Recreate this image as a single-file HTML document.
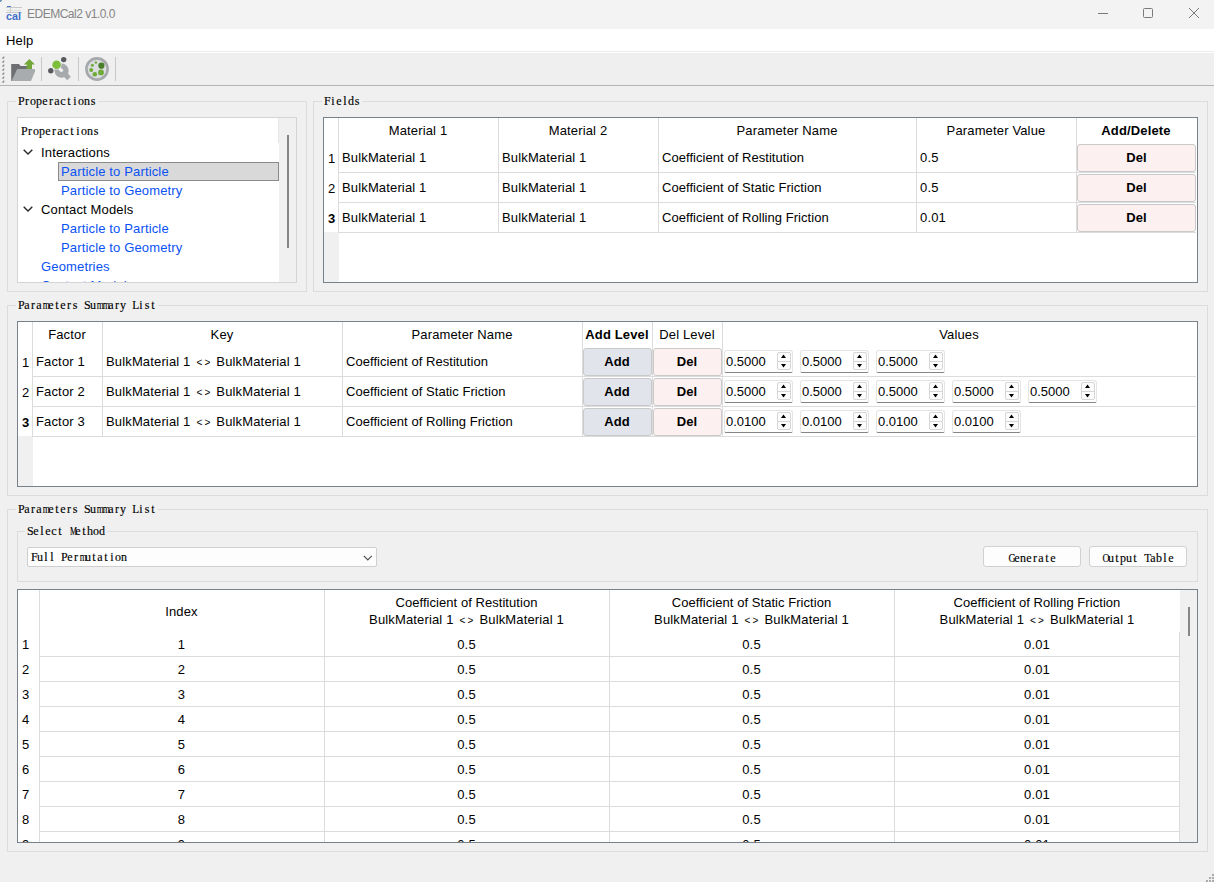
<!DOCTYPE html><html><head><meta charset="utf-8"><style>
html,body{margin:0;padding:0}
body{width:1214px;height:882px;background:#f0f0f0;position:relative;overflow:hidden;font-family:"Liberation Sans",sans-serif;font-size:12px;color:#000}
div{box-sizing:border-box}
.s{position:absolute;white-space:nowrap;font-family:"Liberation Sans",sans-serif;font-size:13px;line-height:16px;letter-spacing:0.15px}
.b{font-weight:bold}
.lg{font-size:10px;display:inline-block;margin:0 1px 0 2.2px;vertical-align:0px}
.m{position:absolute;white-space:nowrap;line-height:14px;font-family:"Liberation Serif",serif;font-size:12px;letter-spacing:0;-webkit-text-stroke:0.15px #000}
.m i{display:inline-block;width:6px;text-align:center;font-style:normal}
.clip{position:absolute;overflow:hidden}
</style></head><body>
<div style="position:absolute;left:0px;top:0px;width:1214px;height:29px;background:#f3f3f3"></div>
<div style="position:absolute;left:0px;top:0px;width:2px;height:2px;background:#6a92b8;border-radius:0 0 2px 0"></div>
<svg style="position:absolute;left:5px;top:5px" width="18" height="17" viewBox="0 0 18 17">
<rect x="2" y="1" width="4" height="1" fill="#4a78c8"/>
<rect x="1" y="2" width="16" height="1" fill="#c8c8c8"/>
<rect x="2" y="5" width="14" height="1" fill="#dcdcdc"/>
<rect x="1" y="7" width="16" height="1" fill="#c8c8c8"/>
<rect x="5" y="2" width="1" height="5" fill="#d0d0d0"/>
<text x="1" y="15" font-family="Liberation Sans" font-weight="bold" font-size="11" fill="#3f6fc8" textLength="15" lengthAdjust="spacingAndGlyphs">cal</text>
</svg>
<div class="s" style="left:27px;top:6px;color:#858585;font-size:12px;letter-spacing:-0.5px">EDEMCal2 v1.0.0</div>
<svg style="position:absolute;left:1090px;top:0" width="124" height="29">
<line x1="8" y1="13.5" x2="18" y2="13.5" stroke="#7a7a7a" stroke-width="1"/>
<rect x="53.5" y="8.5" width="9" height="9" rx="1" fill="none" stroke="#7a7a7a" stroke-width="1"/>
<line x1="99" y1="8" x2="109" y2="18" stroke="#7a7a7a" stroke-width="1"/>
<line x1="109" y1="8" x2="99" y2="18" stroke="#7a7a7a" stroke-width="1"/>
</svg>
<div style="position:absolute;left:0px;top:29px;width:1214px;height:22px;background:#fff"></div>
<div class="s" style="left:6px;top:33px;">Help</div>
<div style="position:absolute;left:0px;top:51px;width:1214px;height:1px;background:#ececec"></div>
<div style="position:absolute;left:0px;top:52px;width:1214px;height:1px;background:#fff"></div>
<div style="position:absolute;left:0px;top:53px;width:1214px;height:32px;background:#efefef"></div>
<div style="position:absolute;left:0px;top:85px;width:1214px;height:1px;background:#b4b4b4"></div>
<svg style="position:absolute;left:0;top:0" width="6" height="90"><path d="M1.6 58.6 L4.2 56 L4.2 58.6 Z" fill="#7e7e7e"/><path d="M1.6 62.6 L4.2 60 L4.2 62.6 Z" fill="#7e7e7e"/><path d="M1.6 66.6 L4.2 64 L4.2 66.6 Z" fill="#7e7e7e"/><path d="M1.6 70.6 L4.2 68 L4.2 70.6 Z" fill="#7e7e7e"/><path d="M1.6 74.6 L4.2 72 L4.2 74.6 Z" fill="#7e7e7e"/><path d="M1.6 78.6 L4.2 76 L4.2 78.6 Z" fill="#7e7e7e"/><path d="M1.6 82.6 L4.2 80 L4.2 82.6 Z" fill="#7e7e7e"/></svg>
<div style="position:absolute;left:41px;top:57px;width:1px;height:24px;background:#c8c8c8"></div>
<div style="position:absolute;left:78px;top:57px;width:1px;height:24px;background:#c8c8c8"></div>
<div style="position:absolute;left:115px;top:57px;width:1px;height:24px;background:#c8c8c8"></div>
<svg style="position:absolute;left:8px;top:54px" width="32" height="30" viewBox="0 0 32 30">
<path d="M3.2 10 H11 L12.5 12 H19 V27 H3.2 Z" fill="#6e6f73"/>
<path d="M9.2 15 H27 V17.5 L23 27 H3.5 Z" fill="#a8acaf"/>
<path d="M21.4 5 L27 10.5 H24 V15 H18.7 V10.5 H15.8 Z" fill="#72a83a"/>
</svg>
<svg style="position:absolute;left:44px;top:54px" width="32" height="30" viewBox="0 0 32 30">
<circle cx="17.6" cy="16.7" r="7.1" fill="#a7aaad"/>
<line x1="19" y1="18" x2="25" y2="24.5" stroke="#a7aaad" stroke-width="5"/>
<circle cx="17.3" cy="16.3" r="1.8" fill="#f0f0f0"/>
<line x1="17.3" y1="16.3" x2="13" y2="12" stroke="#f0f0f0" stroke-width="2.6"/>
<circle cx="12.6" cy="10.7" r="4.9" fill="#f0f0f0"/>
<circle cx="12.6" cy="10.7" r="4.3" fill="#7cbf3c"/>
<circle cx="19.7" cy="5.6" r="2.7" fill="#58595e"/>
<circle cx="6.8" cy="16.8" r="2.7" fill="#58595e"/>
</svg>
<svg style="position:absolute;left:82px;top:54px" width="32" height="30" viewBox="0 0 32 30">
<circle cx="15" cy="15" r="10.6" fill="#dcdde0" stroke="#a6a9ac" stroke-width="2.6"/>
<circle cx="19.4" cy="11.7" r="3.1" fill="#4a7f2a"/>
<circle cx="19" cy="18.4" r="2.9" fill="#6eab38"/>
<circle cx="12.8" cy="20.2" r="2.3" fill="#6eab38"/>
<circle cx="9.2" cy="16" r="2" fill="#6eab38"/>
<circle cx="10.4" cy="11.2" r="1.5" fill="#6eab38"/>
<circle cx="13.9" cy="8.5" r="1.2" fill="#6eab38"/>
</svg>
<div style="position:absolute;left:7px;top:101px;width:300px;height:191px;border:1px solid #dcdcdc;"></div>
<div style="position:absolute;left:16px;top:99px;width:82px;height:4px;background:#f0f0f0"></div>
<div class="m" style="left:18px;top:94px;"><i>P</i><i>r</i><i>o</i><i>p</i><i>e</i><i>r</i><i>a</i><i>c</i><i>t</i><i>i</i><i>o</i><i>n</i><i>s</i></div>
<div class="clip" style="left:17px;top:117px;width:280px;height:166px;border:1px solid #d4d4d4;background:#fff">
<div style="position:absolute;left:261px;top:0px;width:17px;height:164px;background:#f0f0f0"></div>
<div style="position:absolute;left:269px;top:17px;width:2px;height:113px;background:#868686"></div>
<div style="position:absolute;left:260px;top:0px;width:1px;height:25px;background:#e6e6e6"></div>
<div class="m" style="left:3px;top:6px;"><i>P</i><i>r</i><i>o</i><i>p</i><i>e</i><i>r</i><i>a</i><i>c</i><i>t</i><i>i</i><i>o</i><i>n</i><i>s</i></div>
<div style="position:absolute;left:40px;top:44px;width:221px;height:19px;background:#d9d9d9;border:1px solid #8a8a8a"></div>
<div class="s" style="left:23px;top:27px;color:#000">Interactions</div>
<div class="s" style="left:43px;top:46px;color:#0a52f6">Particle to Particle</div>
<div class="s" style="left:43px;top:65px;color:#0a52f6">Particle to Geometry</div>
<div class="s" style="left:23px;top:84px;color:#000">Contact Models</div>
<div class="s" style="left:43px;top:103px;color:#0a52f6">Particle to Particle</div>
<div class="s" style="left:43px;top:122px;color:#0a52f6">Particle to Geometry</div>
<div class="s" style="left:23px;top:141px;color:#0a52f6">Geometries</div>
<div class="s" style="left:23px;top:160px;color:#0a52f6">Contact Models</div>
<svg style="position:absolute;left:5px;top:31px" width="11" height="8"><polyline points="0.7,0.8 5,5 9.3,0.8" fill="none" stroke="#2a2a2a" stroke-width="1.4"/></svg>
<svg style="position:absolute;left:5px;top:88px" width="11" height="8"><polyline points="0.7,0.8 5,5 9.3,0.8" fill="none" stroke="#2a2a2a" stroke-width="1.4"/></svg>
</div>
<div style="position:absolute;left:313px;top:101px;width:895px;height:191px;border:1px solid #dcdcdc;"></div>
<div style="position:absolute;left:322px;top:99px;width:40px;height:4px;background:#f0f0f0"></div>
<div class="m" style="left:324px;top:94px;"><i>F</i><i>i</i><i>e</i><i>l</i><i>d</i><i>s</i></div>
<div class="clip" style="left:323px;top:117px;width:875px;height:166px;border:1px solid #78808a;background:#fff">
<div style="position:absolute;left:0px;top:114px;width:15px;height:50px;background:#f0f0f0"></div>
<div style="position:absolute;left:14px;top:0px;width:1px;height:114px;background:#dcdcdc"></div>
<div style="position:absolute;left:174px;top:0px;width:1px;height:114px;background:#dcdcdc"></div>
<div style="position:absolute;left:334px;top:0px;width:1px;height:114px;background:#dcdcdc"></div>
<div style="position:absolute;left:592px;top:0px;width:1px;height:114px;background:#dcdcdc"></div>
<div style="position:absolute;left:752px;top:0px;width:1px;height:114px;background:#dcdcdc"></div>
<div style="position:absolute;left:14px;top:54px;width:858px;height:1px;background:#dcdcdc"></div>
<div style="position:absolute;left:14px;top:84px;width:858px;height:1px;background:#dcdcdc"></div>
<div style="position:absolute;left:14px;top:114px;width:858px;height:1px;background:#dcdcdc"></div>
<div class="s" style="left:-56.0px;top:5px;width:300px;text-align:center;">Material 1</div>
<div class="s" style="left:104.0px;top:5px;width:300px;text-align:center;">Material 2</div>
<div class="s" style="left:313.0px;top:5px;width:300px;text-align:center;">Parameter Name</div>
<div class="s" style="left:522.0px;top:5px;width:300px;text-align:center;">Parameter Value</div>
<div class="s b" style="left:662.0px;top:5px;width:300px;text-align:center;">Add/Delete</div>
<div class="s" style="left:4px;top:33px;">1</div>
<div class="s" style="left:18px;top:32px;">BulkMaterial 1</div>
<div class="s" style="left:178px;top:32px;">BulkMaterial 1</div>
<div class="s" style="left:338px;top:32px;letter-spacing:0.05px">Coefficient of Restitution</div>
<div class="s" style="left:596px;top:32px;">0.5</div>
<div style="position:absolute;left:753px;top:26px;width:119px;height:28px;background:#fcf0f0;border:1px solid #c9c9c9;border-radius:3px"></div>
<div class="s b" style="left:662.5px;top:32px;width:300px;text-align:center;">Del</div>
<div class="s" style="left:4px;top:63px;">2</div>
<div class="s" style="left:18px;top:62px;">BulkMaterial 1</div>
<div class="s" style="left:178px;top:62px;">BulkMaterial 1</div>
<div class="s" style="left:338px;top:62px;letter-spacing:0.05px">Coefficient of Static Friction</div>
<div class="s" style="left:596px;top:62px;">0.5</div>
<div style="position:absolute;left:753px;top:56px;width:119px;height:28px;background:#fcf0f0;border:1px solid #c9c9c9;border-radius:3px"></div>
<div class="s b" style="left:662.5px;top:62px;width:300px;text-align:center;">Del</div>
<div class="s" style="left:4px;top:93px;font-weight:bold">3</div>
<div class="s" style="left:18px;top:92px;">BulkMaterial 1</div>
<div class="s" style="left:178px;top:92px;">BulkMaterial 1</div>
<div class="s" style="left:338px;top:92px;letter-spacing:0.05px">Coefficient of Rolling Friction</div>
<div class="s" style="left:596px;top:92px;">0.01</div>
<div style="position:absolute;left:753px;top:86px;width:119px;height:28px;background:#fcf0f0;border:1px solid #c9c9c9;border-radius:3px"></div>
<div class="s b" style="left:662.5px;top:92px;width:300px;text-align:center;">Del</div>
</div>
<div style="position:absolute;left:7px;top:305px;width:1201px;height:191px;border:1px solid #dcdcdc;"></div>
<div style="position:absolute;left:16px;top:303px;width:142px;height:4px;background:#f0f0f0"></div>
<div class="m" style="left:18px;top:298px;"><i>P</i><i>a</i><i>r</i><i>a</i><i style="transform:scaleX(0.75)">m</i><i>e</i><i>t</i><i>e</i><i>r</i><i>s</i><i>&nbsp;</i><i>S</i><i>u</i><i style="transform:scaleX(0.75)">m</i><i style="transform:scaleX(0.75)">m</i><i>a</i><i>r</i><i>y</i><i>&nbsp;</i><i style="transform:scaleX(0.95)">L</i><i>i</i><i>s</i><i>t</i></div>
<div class="clip" style="left:17px;top:321px;width:1181px;height:166px;border:1px solid #78808a;background:#fff">
<div style="position:absolute;left:0px;top:114px;width:15px;height:50px;background:#f0f0f0"></div>
<div style="position:absolute;left:14px;top:0px;width:1px;height:114px;background:#dcdcdc"></div>
<div style="position:absolute;left:84px;top:0px;width:1px;height:114px;background:#dcdcdc"></div>
<div style="position:absolute;left:324px;top:0px;width:1px;height:114px;background:#dcdcdc"></div>
<div style="position:absolute;left:564px;top:0px;width:1px;height:114px;background:#dcdcdc"></div>
<div style="position:absolute;left:634px;top:0px;width:1px;height:114px;background:#dcdcdc"></div>
<div style="position:absolute;left:704px;top:0px;width:1px;height:114px;background:#dcdcdc"></div>
<div style="position:absolute;left:14px;top:54px;width:1164px;height:1px;background:#dcdcdc"></div>
<div style="position:absolute;left:14px;top:84px;width:1164px;height:1px;background:#dcdcdc"></div>
<div style="position:absolute;left:14px;top:114px;width:1164px;height:1px;background:#dcdcdc"></div>
<div class="s" style="left:-101.0px;top:5px;width:300px;text-align:center;">Factor</div>
<div class="s" style="left:54.0px;top:5px;width:300px;text-align:center;">Key</div>
<div class="s" style="left:294.0px;top:5px;width:300px;text-align:center;">Parameter Name</div>
<div class="s" style="left:519.0px;top:5px;width:300px;text-align:center;">Del Level</div>
<div class="s" style="left:791.0px;top:5px;width:300px;text-align:center;">Values</div>
<div class="s b" style="left:449.0px;top:5px;width:300px;text-align:center;">Add Level</div>
<div class="s" style="left:4px;top:33px;">1</div>
<div class="s" style="left:18px;top:32px;">Factor 1</div>
<div class="s" style="left:88px;top:32px;">BulkMaterial 1 <span class="lg">&lt;</span><span class="lg" style="margin:0 2.2px 0 1px">&gt;</span> BulkMaterial 1</div>
<div class="s" style="left:328px;top:32px;letter-spacing:0.05px">Coefficient of Restitution</div>
<div style="position:absolute;left:565px;top:26px;width:69px;height:28px;background:#e1e4eb;border:1px solid #c9c9c9;border-radius:3px"></div>
<div class="s b" style="left:449px;top:32px;width:300px;text-align:center;">Add</div>
<div style="position:absolute;left:635px;top:26px;width:69px;height:28px;background:#fcf0f0;border:1px solid #c9c9c9;border-radius:3px"></div>
<div class="s b" style="left:519px;top:32px;width:300px;text-align:center;">Del</div>
<div style="position:absolute;left:706px;top:28px;width:69px;height:23px;background:#fff;border:1px solid #e4e4e4;border-bottom:1px solid #858585;border-radius:3px 3px 2px 2px"></div>
<div class="s" style="left:708px;top:32px;letter-spacing:0">0.5000</div>
<div style="position:absolute;left:759px;top:30px;width:14px;height:18px;background:#fdfdfd;border:1px solid #d6d6d6;border-radius:2px"></div>
<div style="position:absolute;left:760px;top:39px;width:12px;height:1px;background:#d6d6d6"></div>
<svg style="position:absolute;left:759px;top:30px" width="14" height="18"><path d="M4 6 L9 6 L6.5 2.5 Z" fill="#000"/><path d="M4 12 L9 12 L6.5 15.5 Z" fill="#000"/></svg>
<div style="position:absolute;left:782px;top:28px;width:69px;height:23px;background:#fff;border:1px solid #e4e4e4;border-bottom:1px solid #858585;border-radius:3px 3px 2px 2px"></div>
<div class="s" style="left:784px;top:32px;letter-spacing:0">0.5000</div>
<div style="position:absolute;left:835px;top:30px;width:14px;height:18px;background:#fdfdfd;border:1px solid #d6d6d6;border-radius:2px"></div>
<div style="position:absolute;left:836px;top:39px;width:12px;height:1px;background:#d6d6d6"></div>
<svg style="position:absolute;left:835px;top:30px" width="14" height="18"><path d="M4 6 L9 6 L6.5 2.5 Z" fill="#000"/><path d="M4 12 L9 12 L6.5 15.5 Z" fill="#000"/></svg>
<div style="position:absolute;left:858px;top:28px;width:69px;height:23px;background:#fff;border:1px solid #e4e4e4;border-bottom:1px solid #858585;border-radius:3px 3px 2px 2px"></div>
<div class="s" style="left:860px;top:32px;letter-spacing:0">0.5000</div>
<div style="position:absolute;left:911px;top:30px;width:14px;height:18px;background:#fdfdfd;border:1px solid #d6d6d6;border-radius:2px"></div>
<div style="position:absolute;left:912px;top:39px;width:12px;height:1px;background:#d6d6d6"></div>
<svg style="position:absolute;left:911px;top:30px" width="14" height="18"><path d="M4 6 L9 6 L6.5 2.5 Z" fill="#000"/><path d="M4 12 L9 12 L6.5 15.5 Z" fill="#000"/></svg>
<div class="s" style="left:4px;top:63px;">2</div>
<div class="s" style="left:18px;top:62px;">Factor 2</div>
<div class="s" style="left:88px;top:62px;">BulkMaterial 1 <span class="lg">&lt;</span><span class="lg" style="margin:0 2.2px 0 1px">&gt;</span> BulkMaterial 1</div>
<div class="s" style="left:328px;top:62px;letter-spacing:0.05px">Coefficient of Static Friction</div>
<div style="position:absolute;left:565px;top:56px;width:69px;height:28px;background:#e1e4eb;border:1px solid #c9c9c9;border-radius:3px"></div>
<div class="s b" style="left:449px;top:62px;width:300px;text-align:center;">Add</div>
<div style="position:absolute;left:635px;top:56px;width:69px;height:28px;background:#fcf0f0;border:1px solid #c9c9c9;border-radius:3px"></div>
<div class="s b" style="left:519px;top:62px;width:300px;text-align:center;">Del</div>
<div style="position:absolute;left:706px;top:58px;width:69px;height:23px;background:#fff;border:1px solid #e4e4e4;border-bottom:1px solid #858585;border-radius:3px 3px 2px 2px"></div>
<div class="s" style="left:708px;top:62px;letter-spacing:0">0.5000</div>
<div style="position:absolute;left:759px;top:60px;width:14px;height:18px;background:#fdfdfd;border:1px solid #d6d6d6;border-radius:2px"></div>
<div style="position:absolute;left:760px;top:69px;width:12px;height:1px;background:#d6d6d6"></div>
<svg style="position:absolute;left:759px;top:60px" width="14" height="18"><path d="M4 6 L9 6 L6.5 2.5 Z" fill="#000"/><path d="M4 12 L9 12 L6.5 15.5 Z" fill="#000"/></svg>
<div style="position:absolute;left:782px;top:58px;width:69px;height:23px;background:#fff;border:1px solid #e4e4e4;border-bottom:1px solid #858585;border-radius:3px 3px 2px 2px"></div>
<div class="s" style="left:784px;top:62px;letter-spacing:0">0.5000</div>
<div style="position:absolute;left:835px;top:60px;width:14px;height:18px;background:#fdfdfd;border:1px solid #d6d6d6;border-radius:2px"></div>
<div style="position:absolute;left:836px;top:69px;width:12px;height:1px;background:#d6d6d6"></div>
<svg style="position:absolute;left:835px;top:60px" width="14" height="18"><path d="M4 6 L9 6 L6.5 2.5 Z" fill="#000"/><path d="M4 12 L9 12 L6.5 15.5 Z" fill="#000"/></svg>
<div style="position:absolute;left:858px;top:58px;width:69px;height:23px;background:#fff;border:1px solid #e4e4e4;border-bottom:1px solid #858585;border-radius:3px 3px 2px 2px"></div>
<div class="s" style="left:860px;top:62px;letter-spacing:0">0.5000</div>
<div style="position:absolute;left:911px;top:60px;width:14px;height:18px;background:#fdfdfd;border:1px solid #d6d6d6;border-radius:2px"></div>
<div style="position:absolute;left:912px;top:69px;width:12px;height:1px;background:#d6d6d6"></div>
<svg style="position:absolute;left:911px;top:60px" width="14" height="18"><path d="M4 6 L9 6 L6.5 2.5 Z" fill="#000"/><path d="M4 12 L9 12 L6.5 15.5 Z" fill="#000"/></svg>
<div style="position:absolute;left:934px;top:58px;width:69px;height:23px;background:#fff;border:1px solid #e4e4e4;border-bottom:1px solid #858585;border-radius:3px 3px 2px 2px"></div>
<div class="s" style="left:936px;top:62px;letter-spacing:0">0.5000</div>
<div style="position:absolute;left:987px;top:60px;width:14px;height:18px;background:#fdfdfd;border:1px solid #d6d6d6;border-radius:2px"></div>
<div style="position:absolute;left:988px;top:69px;width:12px;height:1px;background:#d6d6d6"></div>
<svg style="position:absolute;left:987px;top:60px" width="14" height="18"><path d="M4 6 L9 6 L6.5 2.5 Z" fill="#000"/><path d="M4 12 L9 12 L6.5 15.5 Z" fill="#000"/></svg>
<div style="position:absolute;left:1010px;top:58px;width:69px;height:23px;background:#fff;border:1px solid #e4e4e4;border-bottom:1px solid #858585;border-radius:3px 3px 2px 2px"></div>
<div class="s" style="left:1012px;top:62px;letter-spacing:0">0.5000</div>
<div style="position:absolute;left:1063px;top:60px;width:14px;height:18px;background:#fdfdfd;border:1px solid #d6d6d6;border-radius:2px"></div>
<div style="position:absolute;left:1064px;top:69px;width:12px;height:1px;background:#d6d6d6"></div>
<svg style="position:absolute;left:1063px;top:60px" width="14" height="18"><path d="M4 6 L9 6 L6.5 2.5 Z" fill="#000"/><path d="M4 12 L9 12 L6.5 15.5 Z" fill="#000"/></svg>
<div class="s" style="left:4px;top:93px;font-weight:bold">3</div>
<div class="s" style="left:18px;top:92px;">Factor 3</div>
<div class="s" style="left:88px;top:92px;">BulkMaterial 1 <span class="lg">&lt;</span><span class="lg" style="margin:0 2.2px 0 1px">&gt;</span> BulkMaterial 1</div>
<div class="s" style="left:328px;top:92px;letter-spacing:0.05px">Coefficient of Rolling Friction</div>
<div style="position:absolute;left:565px;top:86px;width:69px;height:28px;background:#e1e4eb;border:1px solid #c9c9c9;border-radius:3px"></div>
<div class="s b" style="left:449px;top:92px;width:300px;text-align:center;">Add</div>
<div style="position:absolute;left:635px;top:86px;width:69px;height:28px;background:#fcf0f0;border:1px solid #c9c9c9;border-radius:3px"></div>
<div class="s b" style="left:519px;top:92px;width:300px;text-align:center;">Del</div>
<div style="position:absolute;left:706px;top:88px;width:69px;height:23px;background:#fff;border:1px solid #e4e4e4;border-bottom:1px solid #858585;border-radius:3px 3px 2px 2px"></div>
<div class="s" style="left:708px;top:92px;letter-spacing:0">0.0100</div>
<div style="position:absolute;left:759px;top:90px;width:14px;height:18px;background:#fdfdfd;border:1px solid #d6d6d6;border-radius:2px"></div>
<div style="position:absolute;left:760px;top:99px;width:12px;height:1px;background:#d6d6d6"></div>
<svg style="position:absolute;left:759px;top:90px" width="14" height="18"><path d="M4 6 L9 6 L6.5 2.5 Z" fill="#000"/><path d="M4 12 L9 12 L6.5 15.5 Z" fill="#000"/></svg>
<div style="position:absolute;left:782px;top:88px;width:69px;height:23px;background:#fff;border:1px solid #e4e4e4;border-bottom:1px solid #858585;border-radius:3px 3px 2px 2px"></div>
<div class="s" style="left:784px;top:92px;letter-spacing:0">0.0100</div>
<div style="position:absolute;left:835px;top:90px;width:14px;height:18px;background:#fdfdfd;border:1px solid #d6d6d6;border-radius:2px"></div>
<div style="position:absolute;left:836px;top:99px;width:12px;height:1px;background:#d6d6d6"></div>
<svg style="position:absolute;left:835px;top:90px" width="14" height="18"><path d="M4 6 L9 6 L6.5 2.5 Z" fill="#000"/><path d="M4 12 L9 12 L6.5 15.5 Z" fill="#000"/></svg>
<div style="position:absolute;left:858px;top:88px;width:69px;height:23px;background:#fff;border:1px solid #e4e4e4;border-bottom:1px solid #858585;border-radius:3px 3px 2px 2px"></div>
<div class="s" style="left:860px;top:92px;letter-spacing:0">0.0100</div>
<div style="position:absolute;left:911px;top:90px;width:14px;height:18px;background:#fdfdfd;border:1px solid #d6d6d6;border-radius:2px"></div>
<div style="position:absolute;left:912px;top:99px;width:12px;height:1px;background:#d6d6d6"></div>
<svg style="position:absolute;left:911px;top:90px" width="14" height="18"><path d="M4 6 L9 6 L6.5 2.5 Z" fill="#000"/><path d="M4 12 L9 12 L6.5 15.5 Z" fill="#000"/></svg>
<div style="position:absolute;left:934px;top:88px;width:69px;height:23px;background:#fff;border:1px solid #e4e4e4;border-bottom:1px solid #858585;border-radius:3px 3px 2px 2px"></div>
<div class="s" style="left:936px;top:92px;letter-spacing:0">0.0100</div>
<div style="position:absolute;left:987px;top:90px;width:14px;height:18px;background:#fdfdfd;border:1px solid #d6d6d6;border-radius:2px"></div>
<div style="position:absolute;left:988px;top:99px;width:12px;height:1px;background:#d6d6d6"></div>
<svg style="position:absolute;left:987px;top:90px" width="14" height="18"><path d="M4 6 L9 6 L6.5 2.5 Z" fill="#000"/><path d="M4 12 L9 12 L6.5 15.5 Z" fill="#000"/></svg>
</div>
<div style="position:absolute;left:7px;top:509px;width:1201px;height:343px;border:1px solid #dcdcdc;"></div>
<div style="position:absolute;left:16px;top:507px;width:142px;height:4px;background:#f0f0f0"></div>
<div class="m" style="left:18px;top:502px;"><i>P</i><i>a</i><i>r</i><i>a</i><i style="transform:scaleX(0.75)">m</i><i>e</i><i>t</i><i>e</i><i>r</i><i>s</i><i>&nbsp;</i><i>S</i><i>u</i><i style="transform:scaleX(0.75)">m</i><i style="transform:scaleX(0.75)">m</i><i>a</i><i>r</i><i>y</i><i>&nbsp;</i><i style="transform:scaleX(0.95)">L</i><i>i</i><i>s</i><i>t</i></div>
<div style="position:absolute;left:17px;top:531px;width:1181px;height:51px;border:1px solid #dcdcdc;"></div>
<div style="position:absolute;left:25px;top:529px;width:82px;height:4px;background:#f0f0f0"></div>
<div class="m" style="left:27px;top:524px;"><i>S</i><i>e</i><i>l</i><i>e</i><i>c</i><i>t</i><i>&nbsp;</i><i style="transform:scaleX(0.66)">M</i><i>e</i><i>t</i><i>h</i><i>o</i><i>d</i></div>
<div style="position:absolute;left:27px;top:547px;width:350px;height:20px;background:#fdfdfd;border:1px solid #cfcfcf;border-radius:2px"></div>
<div class="m" style="left:31px;top:550px;"><i>F</i><i>u</i><i>l</i><i>l</i><i>&nbsp;</i><i>P</i><i>e</i><i>r</i><i style="transform:scaleX(0.75)">m</i><i>u</i><i>t</i><i>a</i><i>t</i><i>i</i><i>o</i><i>n</i></div>
<svg style="position:absolute;left:363px;top:555px" width="10" height="6"><polyline points="0.8,0.8 4.8,4.8 8.8,0.8" fill="none" stroke="#505050" stroke-width="1.2"/></svg>
<div style="position:absolute;left:983px;top:546px;width:98px;height:21px;background:#fdfdfd;border:1px solid #d0d0d0;border-radius:3px"></div>
<div class="m" style="left:983px;top:551px;width:98px;text-align:center"><i style="transform:scaleX(0.81)">G</i><i>e</i><i>n</i><i>e</i><i>r</i><i>a</i><i>t</i><i>e</i></div>
<div style="position:absolute;left:1089px;top:546px;width:98px;height:21px;background:#fdfdfd;border:1px solid #d0d0d0;border-radius:3px"></div>
<div class="m" style="left:1089px;top:551px;width:98px;text-align:center"><i style="transform:scaleX(0.81)">O</i><i>u</i><i>t</i><i>p</i><i>u</i><i>t</i><i>&nbsp;</i><i style="transform:scaleX(0.95)">T</i><i>a</i><i>b</i><i>l</i><i>e</i></div>
<div class="clip" style="left:17px;top:589px;width:1181px;height:254px;border:1px solid #78808a;background:#fff">
<div style="position:absolute;left:1162px;top:0px;width:17px;height:252px;background:#f0f0f0"></div>
<div style="position:absolute;left:1170px;top:17px;width:2px;height:29px;background:#868686"></div>
<div style="position:absolute;left:21px;top:0px;width:1px;height:252px;background:#dcdcdc"></div>
<div style="position:absolute;left:306px;top:0px;width:1px;height:252px;background:#dcdcdc"></div>
<div style="position:absolute;left:591px;top:0px;width:1px;height:252px;background:#dcdcdc"></div>
<div style="position:absolute;left:876px;top:0px;width:1px;height:252px;background:#dcdcdc"></div>
<div style="position:absolute;left:1161px;top:42px;width:1px;height:210px;background:#dcdcdc"></div>
<div style="position:absolute;left:21px;top:66px;width:1141px;height:1px;background:#dcdcdc"></div>
<div style="position:absolute;left:21px;top:91px;width:1141px;height:1px;background:#dcdcdc"></div>
<div style="position:absolute;left:21px;top:116px;width:1141px;height:1px;background:#dcdcdc"></div>
<div style="position:absolute;left:21px;top:141px;width:1141px;height:1px;background:#dcdcdc"></div>
<div style="position:absolute;left:21px;top:166px;width:1141px;height:1px;background:#dcdcdc"></div>
<div style="position:absolute;left:21px;top:191px;width:1141px;height:1px;background:#dcdcdc"></div>
<div style="position:absolute;left:21px;top:216px;width:1141px;height:1px;background:#dcdcdc"></div>
<div style="position:absolute;left:21px;top:241px;width:1141px;height:1px;background:#dcdcdc"></div>
<div class="s" style="left:13.5px;top:14px;width:300px;text-align:center;">Index</div>
<div class="s" style="left:298.5px;top:5px;width:300px;text-align:center;letter-spacing:0.05px">Coefficient of Restitution</div>
<div class="s" style="left:298.5px;top:22px;width:300px;text-align:center;">BulkMaterial 1 <span class="lg">&lt;</span><span class="lg" style="margin:0 2.2px 0 1px">&gt;</span> BulkMaterial 1</div>
<div class="s" style="left:583.5px;top:5px;width:300px;text-align:center;letter-spacing:0.05px">Coefficient of Static Friction</div>
<div class="s" style="left:583.5px;top:22px;width:300px;text-align:center;">BulkMaterial 1 <span class="lg">&lt;</span><span class="lg" style="margin:0 2.2px 0 1px">&gt;</span> BulkMaterial 1</div>
<div class="s" style="left:869.0px;top:5px;width:300px;text-align:center;letter-spacing:0.05px">Coefficient of Rolling Friction</div>
<div class="s" style="left:869.0px;top:22px;width:300px;text-align:center;">BulkMaterial 1 <span class="lg">&lt;</span><span class="lg" style="margin:0 2.2px 0 1px">&gt;</span> BulkMaterial 1</div>
<div class="s" style="left:4px;top:47px;">1</div>
<div class="s" style="left:13.5px;top:47px;width:300px;text-align:center;">1</div>
<div class="s" style="left:298.5px;top:47px;width:300px;text-align:center;">0.5</div>
<div class="s" style="left:583.5px;top:47px;width:300px;text-align:center;">0.5</div>
<div class="s" style="left:869.0px;top:47px;width:300px;text-align:center;">0.01</div>
<div class="s" style="left:4px;top:72px;">2</div>
<div class="s" style="left:13.5px;top:72px;width:300px;text-align:center;">2</div>
<div class="s" style="left:298.5px;top:72px;width:300px;text-align:center;">0.5</div>
<div class="s" style="left:583.5px;top:72px;width:300px;text-align:center;">0.5</div>
<div class="s" style="left:869.0px;top:72px;width:300px;text-align:center;">0.01</div>
<div class="s" style="left:4px;top:97px;">3</div>
<div class="s" style="left:13.5px;top:97px;width:300px;text-align:center;">3</div>
<div class="s" style="left:298.5px;top:97px;width:300px;text-align:center;">0.5</div>
<div class="s" style="left:583.5px;top:97px;width:300px;text-align:center;">0.5</div>
<div class="s" style="left:869.0px;top:97px;width:300px;text-align:center;">0.01</div>
<div class="s" style="left:4px;top:122px;">4</div>
<div class="s" style="left:13.5px;top:122px;width:300px;text-align:center;">4</div>
<div class="s" style="left:298.5px;top:122px;width:300px;text-align:center;">0.5</div>
<div class="s" style="left:583.5px;top:122px;width:300px;text-align:center;">0.5</div>
<div class="s" style="left:869.0px;top:122px;width:300px;text-align:center;">0.01</div>
<div class="s" style="left:4px;top:147px;">5</div>
<div class="s" style="left:13.5px;top:147px;width:300px;text-align:center;">5</div>
<div class="s" style="left:298.5px;top:147px;width:300px;text-align:center;">0.5</div>
<div class="s" style="left:583.5px;top:147px;width:300px;text-align:center;">0.5</div>
<div class="s" style="left:869.0px;top:147px;width:300px;text-align:center;">0.01</div>
<div class="s" style="left:4px;top:172px;">6</div>
<div class="s" style="left:13.5px;top:172px;width:300px;text-align:center;">6</div>
<div class="s" style="left:298.5px;top:172px;width:300px;text-align:center;">0.5</div>
<div class="s" style="left:583.5px;top:172px;width:300px;text-align:center;">0.5</div>
<div class="s" style="left:869.0px;top:172px;width:300px;text-align:center;">0.01</div>
<div class="s" style="left:4px;top:197px;">7</div>
<div class="s" style="left:13.5px;top:197px;width:300px;text-align:center;">7</div>
<div class="s" style="left:298.5px;top:197px;width:300px;text-align:center;">0.5</div>
<div class="s" style="left:583.5px;top:197px;width:300px;text-align:center;">0.5</div>
<div class="s" style="left:869.0px;top:197px;width:300px;text-align:center;">0.01</div>
<div class="s" style="left:4px;top:222px;">8</div>
<div class="s" style="left:13.5px;top:222px;width:300px;text-align:center;">8</div>
<div class="s" style="left:298.5px;top:222px;width:300px;text-align:center;">0.5</div>
<div class="s" style="left:583.5px;top:222px;width:300px;text-align:center;">0.5</div>
<div class="s" style="left:869.0px;top:222px;width:300px;text-align:center;">0.01</div>
<div class="s" style="left:4px;top:247px;">9</div>
<div class="s" style="left:13.5px;top:247px;width:300px;text-align:center;">9</div>
<div class="s" style="left:298.5px;top:247px;width:300px;text-align:center;">0.5</div>
<div class="s" style="left:583.5px;top:247px;width:300px;text-align:center;">0.5</div>
<div class="s" style="left:869.0px;top:247px;width:300px;text-align:center;">0.01</div>
</div>
<div style="position:absolute;left:1212px;top:874px;width:2px;height:2px;background:#ababab"></div>
<div style="position:absolute;left:1209px;top:877px;width:2px;height:2px;background:#ababab"></div>
<div style="position:absolute;left:1212px;top:877px;width:2px;height:2px;background:#ababab"></div>
<div style="position:absolute;left:1206px;top:880px;width:2px;height:2px;background:#ababab"></div>
<div style="position:absolute;left:1209px;top:880px;width:2px;height:2px;background:#ababab"></div>
<div style="position:absolute;left:1212px;top:880px;width:2px;height:2px;background:#ababab"></div>
</body></html>
